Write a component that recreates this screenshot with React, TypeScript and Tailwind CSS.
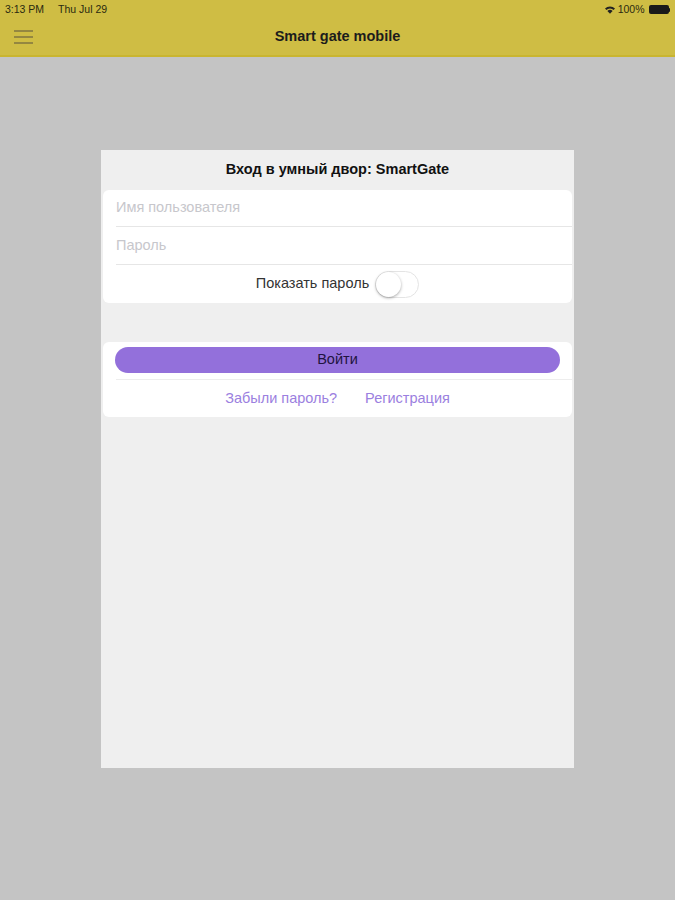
export default function App() {
  return (
    <div
      className="w-[675px] h-[900px] bg-[#c4c4c4] flex flex-col"
      style={{ fontFamily: '"Liberation Sans", Arial, sans-serif' }}
    >
      <header className="h-[57px] bg-[#cfbd44] border-b-2 border-[#c9b530] flex flex-col shrink-0">
        <div className="h-[19px] flex items-center justify-between px-[5px] text-[10.5px] text-[#2a2a10]">
          <span>
            3:13 PM<span className="ml-[14px]">Thu Jul 29</span>
          </span>
          <span className="flex items-center gap-[3px]">
            <svg width="10" height="8" viewBox="0 0 10 8">
              <path d="M0 2.6 A7 7 0 0 1 10 2.6 L8.6 4 A5 5 0 0 0 1.4 4 Z" fill="#222" />
              <path d="M2.4 5 A3.6 3.6 0 0 1 7.6 5 L5 7.8 Z" fill="#222" />
            </svg>
            <span>100%</span>
            <span className="flex items-center ml-[1px]">
              <span className="w-[20px] h-[9px] bg-[#1a1a1a] rounded-[2px]" />
              <span className="w-[1.5px] h-[4px] bg-[#1a1a1a] rounded-r-[1px]" />
            </span>
          </span>
        </div>
        <div className="flex-1 relative flex items-center justify-center">
          <div className="absolute left-[14px] top-[11px] flex flex-col gap-[4px]">
            <span className="w-[19px] h-[2px] bg-[#948740]" />
            <span className="w-[19px] h-[2px] bg-[#948740]" />
            <span className="w-[19px] h-[2px] bg-[#948740]" />
          </div>
          <span className="text-[14.5px] font-bold text-[#1c1c1c] -mt-[1px]">Smart gate mobile</span>
        </div>
      </header>

      <div className="flex justify-center pt-[93px]">
        <div className="w-[473px] h-[618px] bg-[#efefef] flex flex-col">
          <div className="h-[40px] flex items-center justify-center text-[14.5px] font-bold text-[#111]">
            Вход в умный двор: SmartGate
          </div>
          <div className="mx-[2px] bg-white rounded-[6px] flex flex-col">
            <div className="h-[37px] ml-[13px] border-b border-[#e6e6e6] flex items-center text-[14.5px] text-[#c7c7cc]">
              Имя пользователя
            </div>
            <div className="h-[38px] ml-[13px] border-b border-[#e6e6e6] flex items-center text-[14.5px] text-[#c7c7cc]">
              Пароль
            </div>
            <div className="h-[38px] flex items-center justify-center gap-[6px] text-[14.5px] text-[#333]">
              <span>Показать пароль</span>
              <span className="w-[44px] h-[27px] rounded-full border border-[#e4e4e4] bg-white flex items-center">
                <span className="w-[25px] h-[25px] rounded-full bg-white shadow-[0_1px_3px_rgba(0,0,0,0.35)]" />
              </span>
            </div>
          </div>
          <div className="h-[39px]" />
          <div className="mx-[2px] bg-white rounded-[6px] flex flex-col pt-[5px]">
            <div className="mx-[12px] h-[26px] rounded-full bg-[#9370db] flex items-center justify-center text-[14.5px] text-[#1f1440]">
              Войти
            </div>
            <div className="ml-[13px] mt-[6px] border-b border-[#ededed]" />
            <div className="h-[37px] flex items-center justify-center gap-[28px] text-[14.5px] text-[#9b80e0]">
              <span>Забыли пароль?</span>
              <span>Регистрация</span>
            </div>
          </div>
        </div>
      </div>
    </div>
  );
}
